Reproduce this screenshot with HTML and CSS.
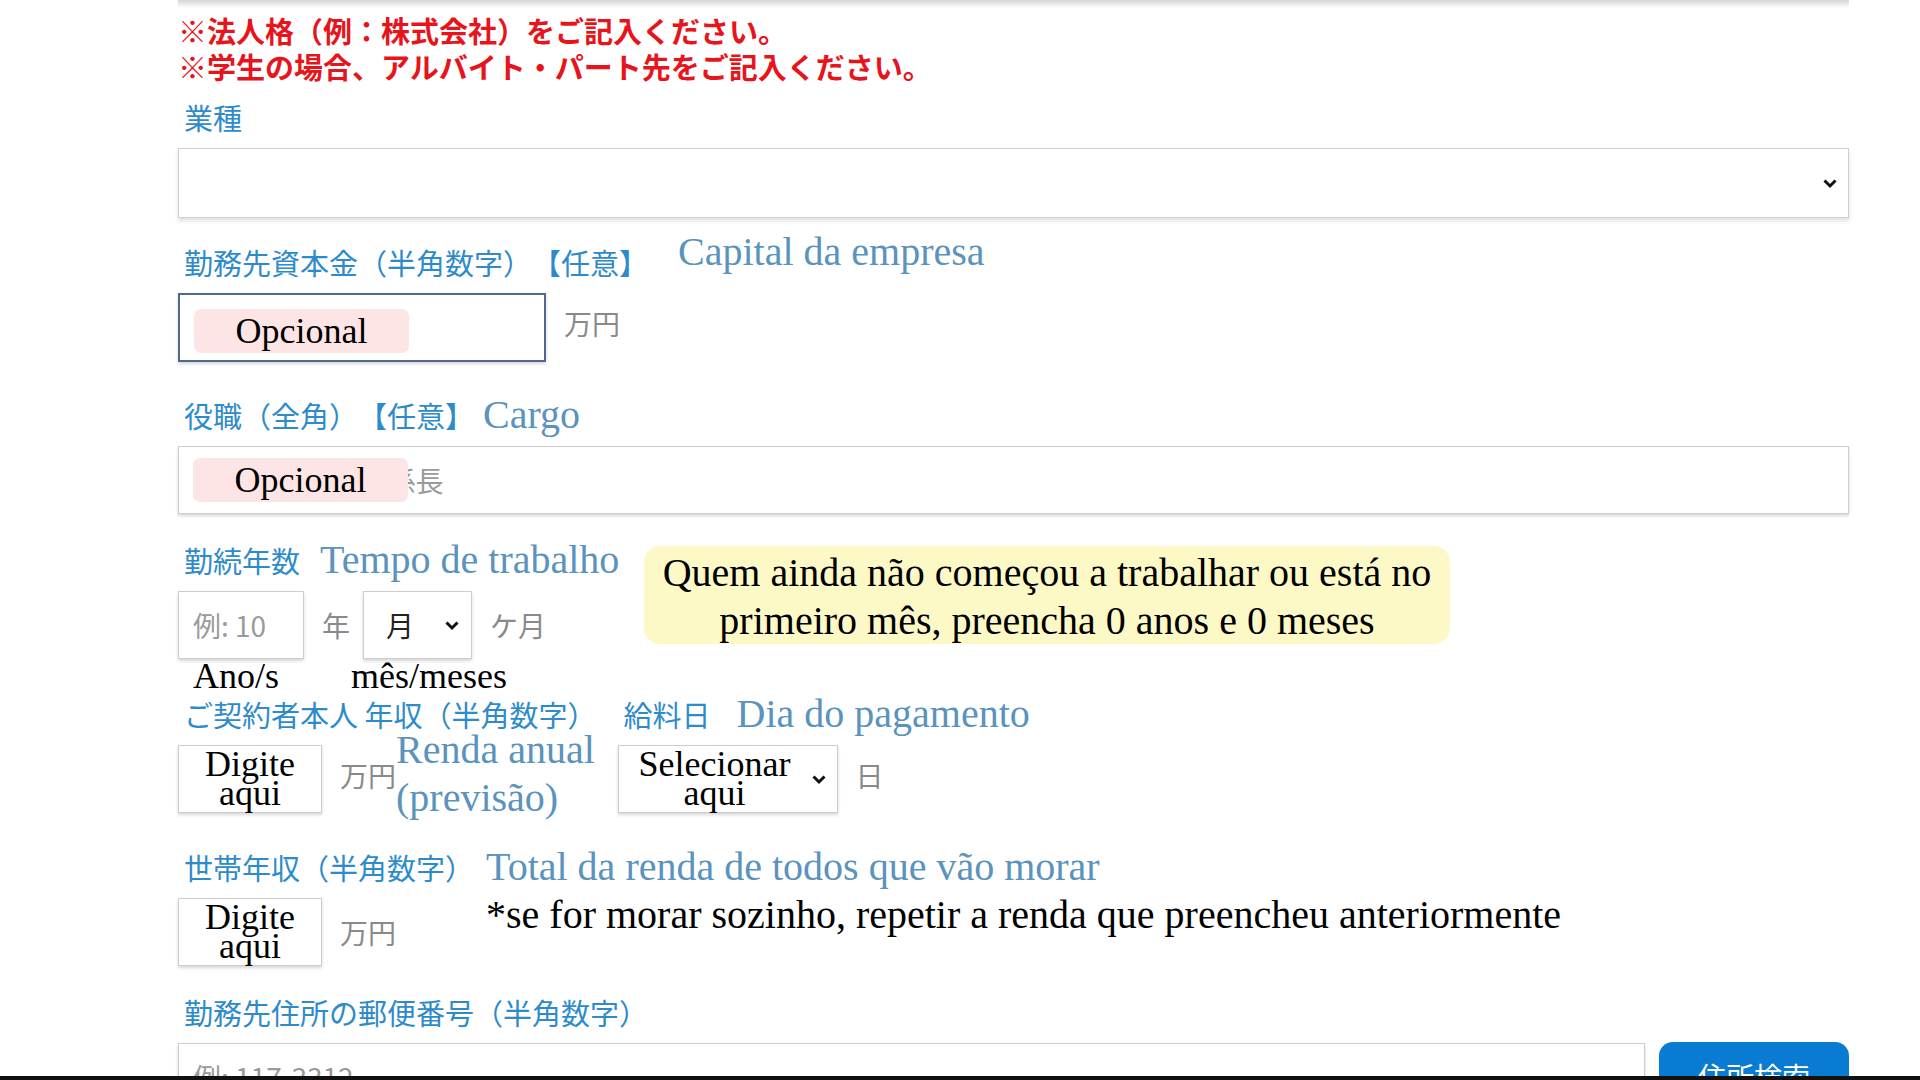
FILE: index.html
```html
<!DOCTYPE html>
<html lang="ja">

<head>
    <meta charset="UTF-8">
    <meta name="viewport" content="width=device-width, initial-scale=1.0">
    <title>勤務先情報</title>

    <link rel="stylesheet" href="styles.css">

</head>

<body>

    <div class="page">
        <div class="top-shadow"></div>

        <p class="note">※法人格（例：株式会社）をご記入ください。<br>※学生の場合、アルバイト・パート先をご記入ください。</p>

        <!-- 業種 -->
        <div class="field f-industry">
            <div class="label-row"><span class="label">業種</span></div>
            <div class="box select full">
                <svg class="chev" width="16" height="11" viewBox="0 0 16 11"><polyline points="2.5,2.5 8,8 13.5,2.5" /></svg>
            </div>
        </div>

        <!-- 資本金 -->
        <div class="field f-capital">
            <div class="label-row">
                <span class="label">勤務先資本金（半角数字）【任意】</span>
                <span class="pt pt-capital">Capital da empresa</span>
            </div>
            <div class="controls">
                <div class="box input capital"><span class="tag">Opcional</span></div>
                <span class="unit unit-up">万円</span>
            </div>
        </div>

        <!-- 役職 -->
        <div class="field f-post">
            <div class="label-row">
                <span class="label">役職（全角）【任意】</span>
                <span class="pt pt-cargo">Cargo</span>
            </div>
            <div class="box input full">
                <span class="placeholder">例: 営業部 課長 係長</span>
                <span class="tag">Opcional</span>
            </div>
        </div>

        <!-- 勤続年数 -->
        <div class="field f-years">
            <div class="years-col">
                <div class="label-row">
                    <span class="label">勤続年数</span>
                    <span class="pt pt-tempo">Tempo de trabalho</span>
                </div>
                <div class="controls">
                    <div class="box input year"><span class="placeholder">例: 10</span></div>
                    <span class="unit">年</span>
                    <div class="box select month">
                        <span class="value">月</span>
                        <svg class="chev" width="16" height="11" viewBox="0 0 16 11"><polyline points="2.5,2.5 8,8 13.5,2.5" /></svg>
                    </div>
                    <span class="unit">ケ月</span>
                </div>
                <div class="sub-labels"><span>Ano/s</span><span>mês/meses</span></div>
            </div>
            <div class="hint">Quem ainda não começou a trabalhar ou está no<br>primeiro mês, preencha 0 anos e 0 meses</div>
        </div>

        <!-- 年収 / 給料日 -->
        <div class="field f-income">
            <div class="col">
                <div class="label-row"><span class="label">ご契約者本人 年収（半角数字）</span></div>
                <div class="controls">
                    <div class="box small"><span class="two">Digite<br>aqui</span></div>
                    <span class="unit unit-up">万円</span>
                    <span class="pt two-line">Renda anual<br>(previsão)</span>
                </div>
            </div>
            <div class="col">
                <div class="label-row">
                    <span class="label">給料日</span>
                    <span class="pt pt-dia">Dia do pagamento</span>
                </div>
                <div class="controls">
                    <div class="box select payday">
                        <span class="two">Selecionar<br>aqui</span>
                        <svg class="chev" width="16" height="11" viewBox="0 0 16 11"><polyline points="2.5,2.5 8,8 13.5,2.5" /></svg>
                    </div>
                    <span class="unit unit-up">日</span>
                </div>
            </div>
        </div>

        <!-- 世帯年収 -->
        <div class="field f-household">
            <span class="label">世帯年収（半角数字）</span>
            <span class="pt">Total da renda de todos que vão morar</span>
            <div class="controls">
                <div class="box small"><span class="two">Digite<br>aqui</span></div>
                <span class="unit">万円</span>
            </div>
            <p class="pt-note">*se for morar sozinho, repetir a renda que preencheu anteriormente</p>
        </div>

        <!-- 郵便番号 -->
        <div class="field f-zip">
            <div class="label-row"><span class="label">勤務先住所の郵便番号（半角数字）</span></div>
            <div class="controls">
                <div class="box input zip"><span class="placeholder">例: 117-3312</span></div>
                <button class="search-btn">住所検索</button>
            </div>
        </div>
    </div>

    <div class="frame-bottom"></div>

</body>

</html>
```

FILE: styles.css
```css
html,
body {
    margin: 0;
    height: 1080px;
    overflow: hidden;
    background: #fff;
}

body {
    font-family: "Noto Sans CJK JP", sans-serif;
    color: #333;
    text-spacing-trim: space-all;
}

.page {
    width: 1671px;
    margin-left: 178px;
}

.top-shadow {
    height: 8px;
    background: linear-gradient(#d6d6d6, #fff);
}

.note {
    margin: 4px 0 0;
    font-size: 29px;
    line-height: 36px;
    font-weight: bold;
    color: #e8141c;
}

/* labels */

.label-row {
    display: flex;
    align-items: center;
    gap: 24px;
    height: 46px;
    padding-left: 6px;
    margin-bottom: 8px;
}

.label {
    font-size: 29px;
    line-height: 1;
    color: #2e8bcb;
    white-space: nowrap;
}

.pt {
    font-family: "Liberation Serif", serif;
    font-size: 40px;
    line-height: 1;
    color: #5a93bd;
    white-space: nowrap;
}

.pt-capital {
    margin-left: 6px;
    margin-bottom: 20px;
}

.pt-cargo {
    margin-left: -15px;
}

.pt-tempo {
    margin-left: -4px;
}

.pt-dia {
    margin-left: 2px;
}

/* boxes */

.controls {
    display: flex;
    align-items: center;
    height: 68px;
}

.box {
    box-sizing: border-box;
    position: relative;
    display: flex;
    align-items: center;
    height: 68px;
    border: 1px solid #cdcdcd;
    background: #fff;
    box-shadow: 0 2px 3px rgba(0, 0, 0, 0.16);
}

.box.full {
    width: 100%;
}

.box.input {
    padding-left: 14px;
}

.select.full {
    height: 70px;
    justify-content: flex-end;
    padding-right: 10px;
    box-shadow: 0 3px 4px rgba(0, 0, 0, 0.12);
}

.chev polyline {
    fill: none;
    stroke: #111;
    stroke-width: 3;
}

.placeholder {
    font-size: 28px;
    color: #9a9a9a;
    white-space: nowrap;
}

.value {
    font-size: 28px;
    color: #222;
}

.tag {
    position: absolute;
    left: 14px;
    top: 50%;
    margin-top: -22px;
    display: flex;
    align-items: center;
    justify-content: center;
    width: 215px;
    height: 44px;
    border-radius: 7px;
    background: #fde5e5;
    font-family: "Liberation Serif", serif;
    font-size: 36px;
    color: #000;
}

.unit {
    margin-left: 18px;
    font-size: 28px;
    line-height: 1;
    color: #8a8a8a;
}

.unit-up {
    margin-bottom: 8px;
}

.two {
    font-family: "Liberation Serif", serif;
    font-size: 36px;
    line-height: 29px;
    text-align: center;
    color: #000;
}

/* fields */

.f-industry {
    margin-top: 10px;
}

.f-capital {
    margin-top: 21px;
}

.capital {
    width: 368px;
    height: 69px;
    border: 2px solid #51688a;
}

.capital .tag {
    top: 14px;
    margin-top: 0;
}

.f-post {
    margin-top: 31px;
}

.f-years {
    display: flex;
    align-items: flex-start;
    margin-top: 23px;
}

.years-col {
    width: 466px;
}

.year {
    width: 126px;
}

.month {
    width: 109px;
    margin-left: 13px;
    padding: 0 11px 0 22px;
    justify-content: space-between;
}

.sub-labels {
    display: flex;
    gap: 72px;
    height: 30px;
    margin-top: 2px;
    padding-left: 15px;
    font-family: "Liberation Serif", serif;
    font-size: 36px;
    line-height: 30px;
    color: #000;
}

.hint {
    box-sizing: border-box;
    width: 806px;
    height: 98px;
    margin-top: 9px;
    padding-top: 3px;
    border-radius: 16px;
    background: #fcf9c6;
    font-family: "Liberation Serif", serif;
    font-size: 40px;
    line-height: 48px;
    text-align: center;
    color: #000;
}

.f-income {
    display: flex;
    gap: 21px;
}

.small {
    width: 144px;
    justify-content: center;
}

.pt.two-line {
    line-height: 48px;
    margin-top: -10px;
}

.payday {
    width: 220px;
    padding: 0 10px 0 20px;
    justify-content: space-between;
}

.f-household {
    display: grid;
    grid-template-columns: 308px 1fr;
    grid-template-rows: 46px 68px;
    row-gap: 8px;
    align-items: center;
    margin-top: 31px;
}

.f-household .label {
    padding-left: 6px;
}

.pt-note {
    align-self: start;
    margin: 0;
    font-family: "Liberation Serif", serif;
    font-size: 40px;
    line-height: 34px;
    color: #000;
    white-space: nowrap;
}

.f-zip {
    margin-top: 23px;
}

.f-zip .controls {
    gap: 14px;
}

.zip {
    flex: 1;
}

.search-btn {
    width: 190px;
    height: 68px;
    margin-top: -2px;
    border: none;
    border-radius: 14px;
    background: #0a7bd3;
    color: #fff;
    font-family: "Noto Sans CJK JP", sans-serif;
    font-size: 28px;
}

.frame-bottom {
    position: fixed;
    left: 0;
    right: 0;
    bottom: 0;
    height: 4px;
    background: #111;
}
```
